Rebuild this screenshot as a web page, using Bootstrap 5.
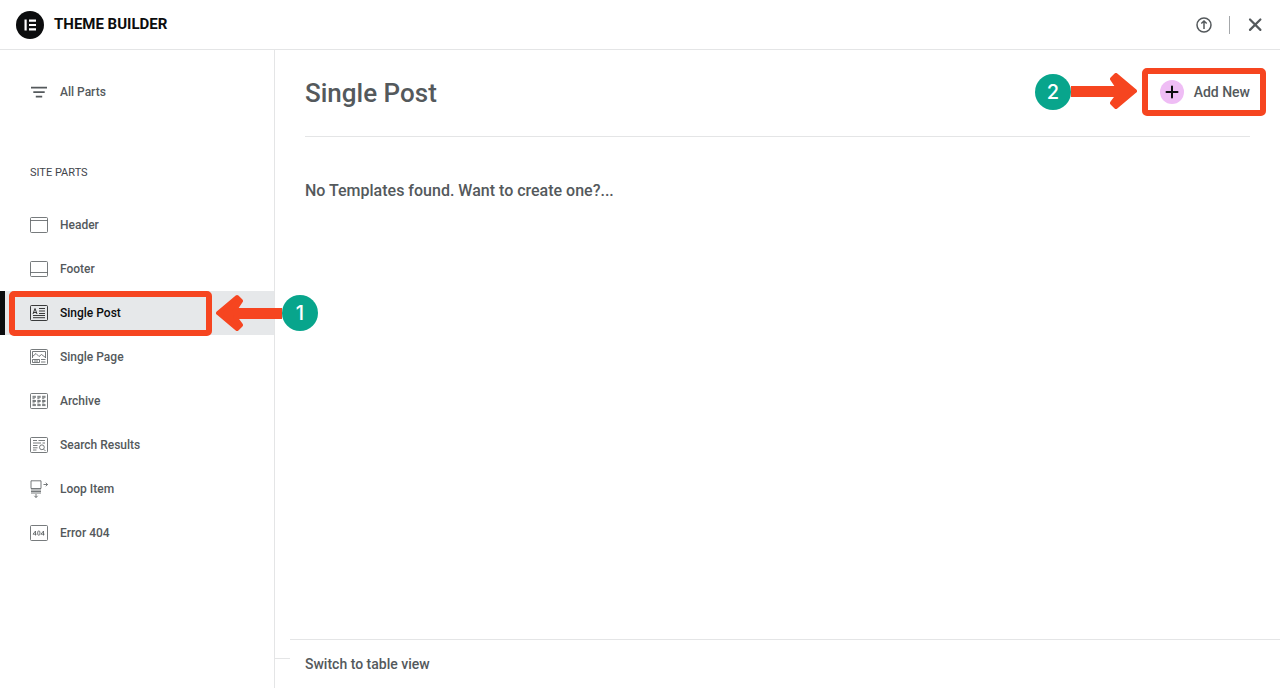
<!DOCTYPE html>
<html lang="en">
<head>
<meta charset="utf-8">
<meta name="viewport" content="width=device-width, initial-scale=1">
<title>Theme Builder</title>
<link href="https://cdn.jsdelivr.net/npm/bootstrap@5.3.0/dist/css/bootstrap.min.css" rel="stylesheet">
<style>
  :root { --ink: #54595c; --rule: #e4e5e6; --mark: #f64520; --step: #08a58c; }
  body { font-family: Roboto, "Liberation Sans", sans-serif; color: var(--ink); font-weight: 500; background: #fff; }
  a, button { color: inherit; }
  .topbar { height: 50px; border-bottom: 1px solid var(--rule); padding: 0 16px; gap: 10px; flex: none; }
  .topbar h1 { font-size: 15px; line-height: 20px; font-weight: 700; color: #0c0d0e; padding-bottom: 2px; }
  .topbar .tools { gap: 17px; }
  .icon-btn { border: 0; background: none; padding: 0; display: flex; font-weight: 500; }
  .bar-divider { width: 1px; height: 18px; background: #a4a7aa; }
  .sidebar { width: 275px; flex: none; border-right: 1px solid var(--rule); padding-top: 20px; z-index: 1; }
  .sidebar .nav-link { height: 44px; padding: 0 30px; gap: 12px; font-size: 12px; line-height: 18px; color: var(--ink); }
  .sidebar .nav-link.active { background: #e6e8ea; color: #0c0d0e; box-shadow: inset 5px 0 #0c0d0e; }
  .sidebar svg.part { width: 18px; height: 18px; flex: none; fill: none; stroke: currentColor; stroke-width: .8; }
  .sidebar h2 { font-size: 11px; line-height: 18px; font-weight: 400; margin: 50px 30px 21px; color: #3f444b; }
  .page-head { margin: 0 30px; height: 87px; border-bottom: 1px solid var(--rule); }
  .page-head h2 { font-size: 26px; line-height: 32px; font-weight: 500; }
  .add-wrap { padding-bottom: 2px; }
  .add-btn { font-size: 14px; line-height: 24px; gap: 10px; }
  .add-dot { width: 24px; height: 24px; border-radius: 50%; background: #efbdf5; color: #0c0d0e; }
  .empty-note { font-size: 16px; line-height: 24px; margin: 42px 30px; }
  .gutter { width: 15px; height: 20px; border-bottom: 1px solid var(--rule); flex: none; }
  .view-foot { border-top: 1px solid var(--rule); height: 49px; padding: 0 15px; font-size: 14px; line-height: 20px; }
  /* tutorial callouts laid over the controls */
  .callout-box { position: absolute; border: 6px solid var(--mark); border-radius: 5px; pointer-events: none; }
  .callout-step { position: absolute; pointer-events: none; }
  .callout-step svg { display: block; fill: var(--mark); stroke: var(--mark); stroke-width: 4; stroke-linejoin: round; }
  .step-num { width: 36px; height: 36px; border-radius: 50%; background: var(--step); color: #fff; font: 500 20px/36px Inter, "Open Sans", sans-serif; text-align: center; }
  .box-post { left: 9px; right: 62px; top: 0; bottom: -1px; }
  .step-post { left: 216px; top: 3px; }
  .box-add { left: -18px; right: -16px; top: -12px; bottom: -10px; }
  .step-add { right: 113px; top: -7px; }
</style>
</head>
<body>
<div class="d-flex flex-column min-vh-100">
  <header class="topbar d-flex align-items-center">
    <svg width="28" height="28" viewBox="0 0 28 28" aria-hidden="true"><circle cx="14" cy="14" r="14" fill="#0c0d0e"/><path d="M8.500 8.500h2.200v11H8.500zM13 8.500h7v2.200h-7zM13 12.900h7v2.200h-7zM13 17.300h7v2.200h-7z" fill="#fff"/></svg>
    <h1 class="mb-0 me-auto">THEME BUILDER</h1>
    <div class="tools d-flex align-items-center">
      <button class="icon-btn" type="button" aria-label="Import"><svg width="16" height="16" viewBox="0 0 16 16" fill="none" stroke="currentColor" stroke-width="1.500"><circle cx="8" cy="8" r="7"/><path d="M8 12V4.500M5.300 6.500 8 4l2.700 2.500"/></svg></button>
      <span class="bar-divider"></span>
      <button class="icon-btn" type="button" aria-label="Close"><svg width="17" height="18" viewBox="0 0 17 18" fill="none" stroke="currentColor" stroke-width="2.200" stroke-linecap="round"><path d="m3 3.500 10.400 10.400M13.400 3.500 3 13.900"/></svg></button>
    </div>
  </header>

  <div class="d-flex flex-fill">
    <nav class="sidebar" aria-label="Site parts">
      <a class="nav-link d-flex align-items-center" href="#all"><svg class="part" viewBox="0 0 18 18"><path fill="currentColor" stroke="none" d="M1 3.700h16v1.700H1zM3.300 8.200h11.400v1.700H3.300zM5.800 12.700h6.400v1.700H5.800z"/></svg>All Parts</a>
      <h2>SITE PARTS</h2>
      <a class="nav-link d-flex align-items-center" href="#header"><svg class="part" viewBox="0 0 18 18"><rect x=".5" y="1.500" width="17" height="15" rx="1"/><path d="M.5 4.500h17"/></svg>Header</a>
      <a class="nav-link d-flex align-items-center" href="#footer"><svg class="part" viewBox="0 0 18 18"><rect x=".5" y="1.500" width="17" height="15" rx="1"/><path d="M.5 12.500h17"/></svg>Footer</a>
      <div class="position-relative">
        <a class="nav-link active d-flex align-items-center" href="#single-post" aria-current="page"><svg class="part" viewBox="0 0 18 18"><rect x=".5" y="1.500" width="17" height="15" rx="1"/><path d="m3 10 2-5.500L7 10M3.600 8.500h2.800M9 4.500h6M9 7h6M9 9.500h6M3 11.500h12M3 13.700h12"/></svg>Single Post</a>
        <span class="callout-box box-post"></span>
        <div class="callout-step step-post d-flex align-items-center">
          <svg width="66" height="38" viewBox="0 0 66 38"><path d="M2 19 21 3l4 4-6 9h49v7H19l6 8-4 4z"/></svg>
          <span class="step-num">1</span>
        </div>
      </div>
      <a class="nav-link d-flex align-items-center" href="#single-page"><svg class="part" viewBox="0 0 18 18"><rect x=".5" y="1.500" width="17" height="15" rx="1"/><path d="M2.500 10V3.500h13V10M2.500 8.500 6 5.500l3 3 2.500-2 4 3M2.500 11.500h7v3h-7zM11 11.500h4.500M11 14h4.500M4 13h4"/></svg>Single Page</a>
      <a class="nav-link d-flex align-items-center" href="#archive"><svg class="part" viewBox="0 0 18 18"><rect x=".5" y="1.500" width="17" height="15" rx="1"/><path stroke-dasharray="3.400 1.400" d="M2.500 4.300h13.500M2.500 5.300h13.500M2.500 8.500h13.500M2.500 9.500h13.500M2.500 12.600h13.500M2.500 13.600h13.500"/><path stroke-dasharray="2.200 2.600" d="M2.500 6.700h13M2.500 10.900h13"/></svg>Archive</a>
      <a class="nav-link d-flex align-items-center" href="#search"><svg class="part" viewBox="0 0 18 18"><rect x=".5" y="1.500" width="17" height="15" rx="1"/><path d="M3 4.500h4M8.500 4.500h6.500M3 7h8M12.500 7H15M3 9.500h4.500M3 11.800h4.500M3 14h3.500M13.700 13.200l1.800 1.800"/><circle cx="11.900" cy="11.300" r="2.400"/></svg>Search Results</a>
      <a class="nav-link d-flex align-items-center" href="#loop"><svg class="part" viewBox="0 0 18 18"><path d="M1 .8h10v7.700H1zM1 10h10M1 11.500h10M1 13h10M13.500 4.500h4M15.800 2.700 17.500 4.500l-1.700 1.800M6 14v3.500M4.300 15.800 6 17.500l1.700-1.700"/></svg>Loop Item</a>
      <a class="nav-link d-flex align-items-center" href="#error"><svg class="part" viewBox="0 0 18 18"><rect x=".5" y="1.500" width="17" height="15" rx="1"/><path d="M5.500 11.500v-4.500L3 10.200h3.500M13.500 11.500v-4.500L11 10.200h3.500"/><rect x="7.700" y="7" width="2.200" height="4.200" rx="1"/></svg>Error 404</a>
    </nav>

    <main class="d-flex flex-column flex-fill">
      <div class="page-head d-flex align-items-center justify-content-between">
        <h2 class="mb-0">Single Post</h2>
        <div class="add-wrap position-relative">
          <button class="icon-btn add-btn align-items-center" type="button"><span class="add-dot d-flex align-items-center justify-content-center"><svg width="14" height="14" viewBox="0 0 14 14" stroke="currentColor" stroke-width="2" stroke-linecap="round"><path d="M7 1.500v11M1.500 7h11"/></svg></span>Add New</button>
          <span class="callout-box box-add"></span>
          <div class="callout-step step-add d-flex align-items-center">
            <span class="step-num">2</span>
            <svg width="66" height="38" viewBox="0 0 66 38"><path d="M64 18 45 2l-4 4 6 9H-2v7h49l-6 8 4 4z"/></svg>
          </div>
        </div>
      </div>
      <p class="empty-note">No Templates found. Want to create one?...</p>
      <div class="d-flex mt-auto">
        <span class="gutter"></span>
        <footer class="view-foot flex-fill d-flex align-items-center"><button class="icon-btn" type="button">Switch to table view</button></footer>
      </div>
    </main>
  </div>
</div>
<script src="https://cdn.jsdelivr.net/npm/bootstrap@5.3.0/dist/js/bootstrap.bundle.min.js"></script>
</body>
</html>
